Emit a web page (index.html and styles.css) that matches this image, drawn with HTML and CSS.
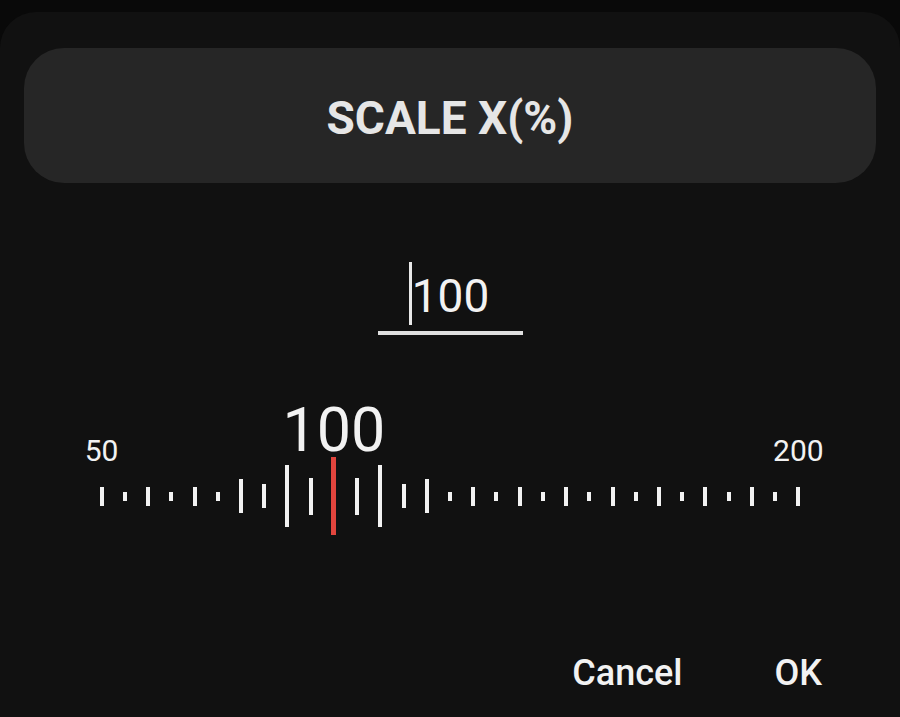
FILE: index.html
```html
<!DOCTYPE html>
<html lang="en">
<head>
  <meta charset="UTF-8" />
  <meta name="viewport" content="width=device-width, initial-scale=1.0" />
  <title>Scale X</title>
  <link rel="stylesheet" href="styles.css">
</head>
<body>
<main class="dialog">
  <h1 class="dialog-title">SCALE X(%)</h1>

  <div class="field">
    <div class="field-row">
      <span class="cursor"></span>
      <span class="field-value">100</span>
    </div>
    <div class="field-line"></div>
  </div>

  <div class="scale">
    <div class="scale-labels">
      <span class="label label-min">50</span>
      <span class="label label-current">100</span>
      <span class="label label-max">200</span>
    </div>
    <div class="scale-ticks">
      <span class="tick long"></span>
      <span class="tick short"></span>
      <span class="tick long"></span>
      <span class="tick short"></span>
      <span class="tick long"></span>
      <span class="tick short"></span>
      <span class="tick d4"></span>
      <span class="tick d3"></span>
      <span class="tick d2"></span>
      <span class="tick d1"></span>
      <span class="tick current"></span>
      <span class="tick d1"></span>
      <span class="tick d2"></span>
      <span class="tick d3"></span>
      <span class="tick d4"></span>
      <span class="tick short"></span>
      <span class="tick long"></span>
      <span class="tick short"></span>
      <span class="tick long"></span>
      <span class="tick short"></span>
      <span class="tick long"></span>
      <span class="tick short"></span>
      <span class="tick long"></span>
      <span class="tick short"></span>
      <span class="tick long"></span>
      <span class="tick short"></span>
      <span class="tick long"></span>
      <span class="tick short"></span>
      <span class="tick long"></span>
      <span class="tick short"></span>
      <span class="tick long"></span>
    </div>
  </div>

  <div class="actions">
    <button class="action">Cancel</button>
    <button class="action">OK</button>
  </div>
</main>
</body>
</html>
```

FILE: styles.css
```css
body {
  margin: 0;
  background: #090909;
  font-family: Roboto, 'Noto Sans', sans-serif;
  color: #f2f2f2;
}

.dialog {
  margin-top: 12px;
  min-height: 705px;
  box-sizing: border-box;
  padding: 36px 24px 0;
  background: #111111;
  border-radius: 36px 36px 0 0;
  display: flex;
  flex-direction: column;
}

.dialog-title {
  margin: 0;
  height: 135px;
  box-sizing: border-box;
  padding-top: 5px;
  display: flex;
  align-items: center;
  justify-content: center;
  background: #262626;
  border-radius: 40px;
  font-size: 46px;
  line-height: 46px;
  font-weight: 700;
  color: #e6e6e6;
}

.field {
  margin-top: 79px;
  display: flex;
  flex-direction: column;
  align-items: center;
}

.field-row {
  height: 63px;
  display: flex;
  align-items: flex-start;
  margin-left: -2px;
}

.cursor {
  width: 3px;
  height: 63px;
  background: #e8e8e8;
}

.field-value {
  margin-top: 11px;
  font-size: 46px;
  line-height: 46px;
  color: #f2f2f2;
}

.field-line {
  margin-top: 6px;
  width: 145px;
  height: 4px;
  background: #e0e0e0;
}

.scale {
  margin-top: 65px;
}

.scale-labels,
.scale-ticks {
  width: 720px;
  margin: 0 auto;
  display: grid;
  grid-template-columns: repeat(31, minmax(0, 1fr));
}

.scale-labels {
  height: 57px;
  align-items: start;
}

.label {
  grid-row: 1;
  justify-self: center;
  white-space: nowrap;
  font-size: 30px;
  line-height: 30px;
  margin-top: 36px;
}

.label-min { grid-column: 1; }
.label-max { grid-column: 31; }

.label-current {
  grid-column: 11;
  font-size: 61px;
  line-height: 61px;
  margin-top: 0;
}

.scale-ticks {
  height: 78px;
  align-items: center;
}

.tick {
  justify-self: center;
  width: 4px;
  height: 19px;
  background: #f2f2f2;
}

.tick.short { height: 9px; }
.tick.d4 { height: 34px; }
.tick.d3 { height: 24px; }
.tick.d2 { height: 62px; }
.tick.d1 { height: 37px; }

.tick.current {
  width: 5px;
  height: 78px;
  background: #e2453d;
}

.actions {
  margin-top: 120px;
  display: flex;
  justify-content: flex-end;
  gap: 92px;
  padding-right: 54px;
}

.action {
  padding: 0;
  border: none;
  background: none;
  font-family: Roboto, 'Noto Sans', sans-serif;
  font-size: 36px;
  line-height: 36px;
  font-weight: 500;
  color: #f2f2f2;
  cursor: pointer;
}
```
